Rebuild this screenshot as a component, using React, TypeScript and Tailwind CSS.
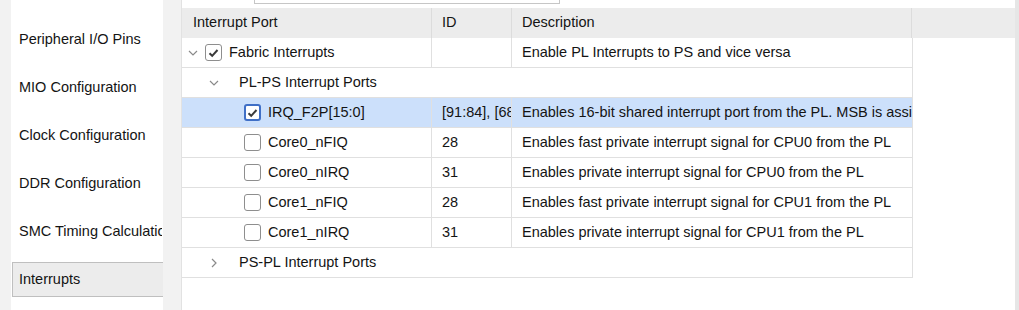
import React from "react";

const font = { fontFamily: '"Liberation Sans", Arial, sans-serif' };

function Chevron({ dir }: { dir: "down" | "right" }) {
  return (
    <svg width="10" height="10" viewBox="0 0 10 10" className="shrink-0">
      {dir === "down" ? (
        <path d="M1 3 L5 7 L9 3" fill="none" stroke="#8a8a8a" strokeWidth="1.2" />
      ) : (
        <path d="M3 1 L7 5 L3 9" fill="none" stroke="#8a8a8a" strokeWidth="1.2" />
      )}
    </svg>
  );
}

function Check({ checked, focus }: { checked?: boolean; focus?: boolean }) {
  return (
    <div
      className={
        "w-[17px] h-[17px] shrink-0 rounded-[3px] bg-white flex items-center justify-center " +
        (focus ? "border-2 border-[#3f6fc6]" : "border border-[#8e8e8e]")
      }
    >
      {checked && (
        <svg width="11" height="10" viewBox="0 0 11 10">
          <path d="M1.5 5.2 L4.2 7.8 L9.5 2" fill="none" stroke="#3a3a3a" strokeWidth="2" />
        </svg>
      )}
    </div>
  );
}

const sideItems = [
  "Peripheral I/O Pins",
  "MIO Configuration",
  "Clock Configuration",
  "DDR Configuration",
  "SMC Timing Calculation",
  "Interrupts",
];

type Row = {
  level: number;
  label: string;
  chevron?: "down" | "right";
  check?: boolean;
  checked?: boolean;
  focus?: boolean;
  id?: string;
  desc?: string;
  selected?: boolean;
  span?: boolean;
};

const rows: Row[] = [
  { level: 0, label: "Fabric Interrupts", chevron: "down", check: true, checked: true, id: "", desc: "Enable PL Interrupts to PS and vice versa" },
  { level: 1, label: "PL-PS Interrupt Ports", chevron: "down", span: true },
  { level: 2, label: "IRQ_F2P[15:0]", check: true, checked: true, focus: true, id: "[91:84], [68:61]", desc: "Enables 16-bit shared interrupt port from the PL. MSB is assigned the highest ID", selected: true },
  { level: 2, label: "Core0_nFIQ", check: true, id: "28", desc: "Enables fast private interrupt signal for CPU0 from the PL" },
  { level: 2, label: "Core0_nIRQ", check: true, id: "31", desc: "Enables private interrupt signal for CPU0 from the PL" },
  { level: 2, label: "Core1_nFIQ", check: true, id: "28", desc: "Enables fast private interrupt signal for CPU1 from the PL" },
  { level: 2, label: "Core1_nIRQ", check: true, id: "31", desc: "Enables private interrupt signal for CPU1 from the PL" },
  { level: 1, label: "PS-PL Interrupt Ports", chevron: "right", span: true },
];

function FirstCell({ r }: { r: Row }) {
  let pad = "pl-[6px]";
  if (r.level === 1) pad = "pl-[27px]";
  if (r.level === 2) pad = "pl-[62px]";
  return (
    <div className={"flex items-center h-full " + pad}>
      {r.chevron && <Chevron dir={r.chevron} />}
      {r.level === 1 && <div className="w-[20px]" />}
      {r.level === 0 && <div className="w-[7px]" />}
      {r.check && <Check checked={r.checked} focus={r.focus} />}
      <span className={r.check ? "ml-[7px]" : ""}>{r.label}</span>
    </div>
  );
}

export default function App() {
  return (
    <div
      className="w-[1019px] h-[310px] flex bg-[#f0f0f0] text-[14.5px] text-[#141414] overflow-hidden"
      style={font}
    >
      <div className="w-[11px] bg-[#f2f2f2]" />
      <div className="w-[152px] bg-white pt-[22px] pl-[1px] shrink-0">
        {sideItems.map((s) => {
          const sel = s === "Interrupts";
          return (
            <div
              key={s}
              className={
                "h-[35px] mb-[13px] flex items-center pl-[6px] whitespace-nowrap overflow-hidden " +
                (sel ? "bg-[#ececec] border border-r-0 border-[#bfbfbf]" : "border border-transparent")
              }
            >
              {s}
            </div>
          );
        })}
      </div>
      <div className="w-[19px] bg-[#f2f2f2] border-r border-[#e2e2e2] shrink-0" />
      <div className="w-[833px] bg-white shrink-0">
        <div className="ml-[72px] w-[306px] h-[4px] border-x border-b border-[#c6c6c6]" />
        <div className="mt-[4px]">
          <div className="flex h-[30px] bg-[#ececec]">
            <div className="w-[250px] pl-[11px] flex items-center border-r border-[#dcdcdc]">Interrupt Port</div>
            <div className="w-[80px] pl-[10px] flex items-center border-r border-[#dcdcdc]">ID</div>
            <div className="w-[400px] pl-[10px] flex items-center border-r border-[#dcdcdc]">Description</div>
            <div className="flex-1" />
          </div>
          <div className="w-[731px] border-r border-[#e0e0e0]">
            {rows.map((r, i) => (
              <div
                key={i}
                className={
                  "flex h-[30px] border-b border-[#e0e0e0] whitespace-nowrap " +
                  (r.selected ? "bg-[#cce0fb]" : "bg-white")
                }
              >
                {r.span ? (
                  <div className="flex-1">
                    <FirstCell r={r} />
                  </div>
                ) : (
                  <>
                    <div className="w-[250px] border-r border-[#e0e0e0] overflow-hidden">
                      <FirstCell r={r} />
                    </div>
                    <div className="w-[80px] pl-[10px] flex items-center border-r border-[#e0e0e0] overflow-hidden">
                      {r.id}
                    </div>
                    <div className="w-[400px] pl-[10px] flex items-center overflow-hidden">{r.desc}</div>
                  </>
                )}
              </div>
            ))}
          </div>
        </div>
      </div>
      <div className="flex-1 bg-[#e6e6e6]" />
    </div>
  );
}
